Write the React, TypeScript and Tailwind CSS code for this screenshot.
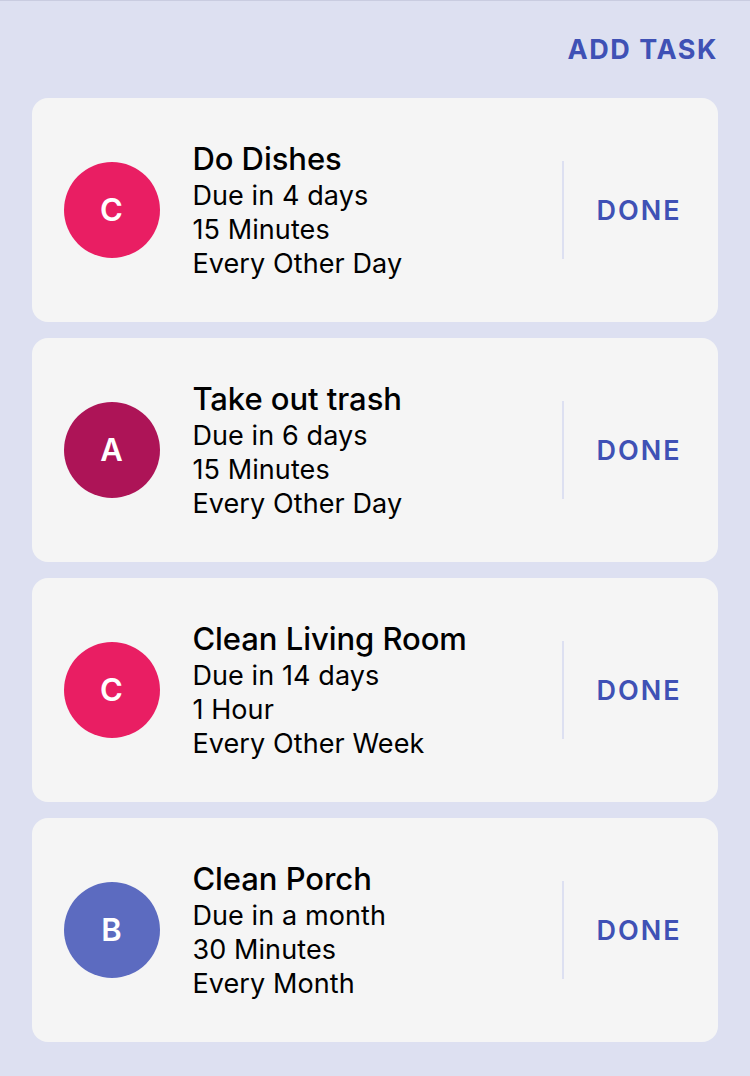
type Task = { initial: string; color: string; title: string; due: string; time: string; repeat: string };

const tasks: Task[] = [
  { initial: "C", color: "bg-[#e91e63]", title: "Do Dishes", due: "Due in 4 days", time: "15 Minutes", repeat: "Every Other Day" },
  { initial: "A", color: "bg-[#ad1457]", title: "Take out trash", due: "Due in 6 days", time: "15 Minutes", repeat: "Every Other Day" },
  { initial: "C", color: "bg-[#e91e63]", title: "Clean Living Room", due: "Due in 14 days", time: "1 Hour", repeat: "Every Other Week" },
  { initial: "B", color: "bg-[#5c6bc0]", title: "Clean Porch", due: "Due in a month", time: "30 Minutes", repeat: "Every Month" },
];

function TaskCard({ task }: { task: Task }) {
  return (
    <li className="flex h-56 items-center rounded-2xl bg-[#f5f5f5] px-8">
      <div className={`flex size-24 shrink-0 items-center justify-center rounded-full pt-px pr-px text-[31px] font-semibold text-white ${task.color}`}>
        {task.initial}
      </div>
      <div className="ml-8 flex-1 pt-px pl-[0.4px] text-[27px] leading-[34px] tracking-[0.1px] text-black">
        <h2 className="pb-0.5 text-[31px] leading-[36px] font-medium tracking-[-0.05px]">{task.title}</h2>
        <p>{task.due}</p>
        <p>{task.time}</p>
        <p>{task.repeat}</p>
      </div>
      <div className="flex h-[98px] w-[124px] items-center border-l-2 border-[#dde0f1] pl-[32.5px]">
        <button className="pt-px text-[27px] leading-[34px] font-semibold tracking-[2px] text-[#3f51b5]">DONE</button>
      </div>
    </li>
  );
}

export default function App() {
  return (
    <main className="h-[1076px] w-[750px] overflow-hidden border-t border-[#c9cce0] bg-[#dde0f1] px-8 font-[Inter,sans-serif]">
      <div className="flex h-[97px] items-center justify-end">
        <button className="text-[27px] leading-[34px] font-bold tracking-[1.55px] text-[#3f51b5]">ADD TASK</button>
      </div>
      <ul className="flex flex-col gap-4">
        {tasks.map((task) => (
          <TaskCard key={task.title} task={task} />
        ))}
      </ul>
    </main>
  );
}
